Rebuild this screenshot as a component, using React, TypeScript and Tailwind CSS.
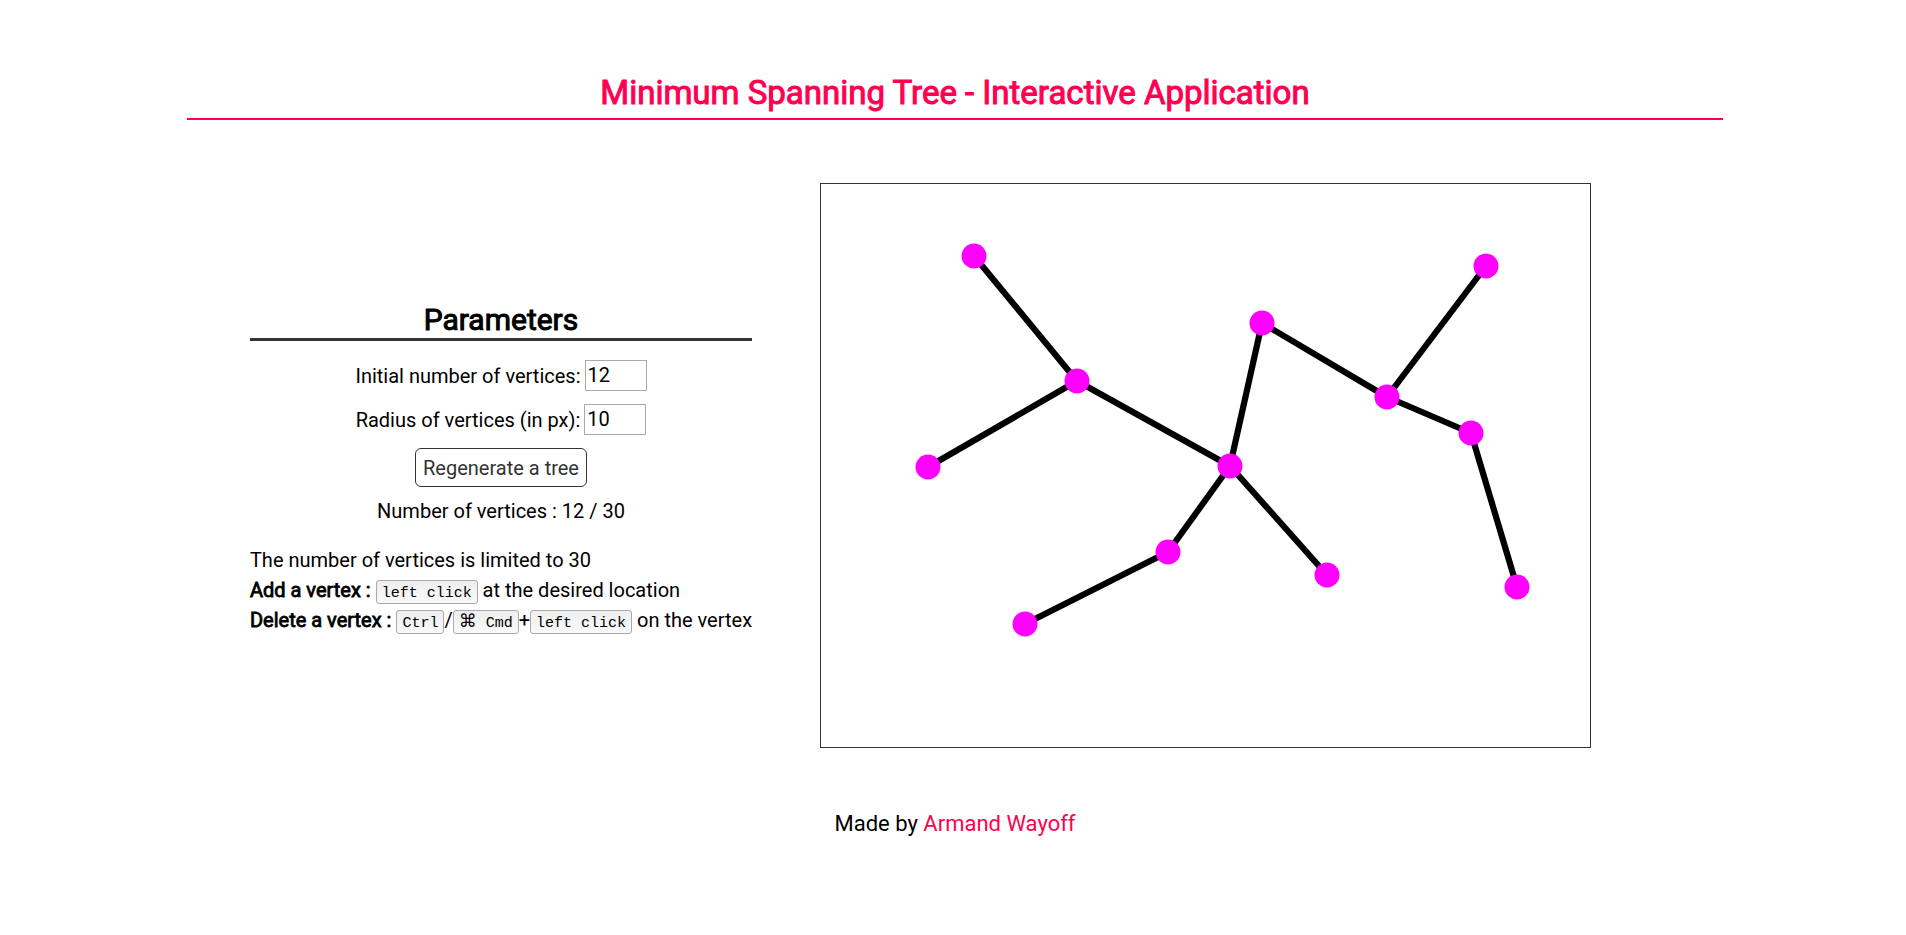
import { useState } from "react";
import type { ReactNode } from "react";

const vertices: [number, number][] = [
  [153, 72],
  [256, 197],
  [107, 283],
  [409, 282],
  [441, 139],
  [566, 213],
  [665, 82],
  [650, 249],
  [696, 403],
  [506, 391],
  [347, 368],
  [204, 440],
];

const edges: [number, number][] = [
  [0, 1],
  [1, 2],
  [1, 3],
  [3, 4],
  [4, 5],
  [5, 6],
  [5, 7],
  [7, 8],
  [3, 9],
  [3, 10],
  [10, 11],
];

function Key({ children }: { children: ReactNode }) {
  return (
    <kbd className="inline-block h-6 rounded-[3px] border border-[#aaa] bg-linear-to-b from-[#eee] to-[#f9f9f9] px-[5px] pt-[4px] align-middle font-['Liberation_Mono','DejaVu_Sans',monospace] text-[15px] leading-[18px]">
      {children}
    </kbd>
  );
}

function NumberField({ id, label, initial }: { id: string; label: string; initial: string }) {
  const [value, setValue] = useState(initial);
  return (
    <div className="flex items-center gap-1">
      <label htmlFor={id}>{label}</label>
      <input
        id={id}
        type="text"
        inputMode="numeric"
        value={value}
        onChange={(e) => setValue(e.target.value)}
        className="h-[31px] w-[62px] border border-[#aaa] bg-white px-[2px] pb-px"
      />
    </div>
  );
}

export default function App() {
  return (
    <div className="pt-[72px] pr-[183px] pl-[187px] font-[Roboto,sans-serif] text-[20px] leading-[30px] text-black">
      <header className="border-b-2 border-[#ff0050] pb-1">
        <h1 className="text-center text-[33px] leading-[42px] font-normal text-[#ff0050] [-webkit-text-stroke:1px_#ff0050]">
          Minimum Spanning Tree - Interactive Application
        </h1>
      </header>

      <main className="mt-[63px] flex items-center justify-center gap-[68px] pr-[69px]">
        <section className="flex flex-col pt-[6px]">
          <h2 className="border-b-3 border-[#333] text-center text-[30px] leading-[36px] font-normal [-webkit-text-stroke:1px_black]">
            Parameters
          </h2>
          <div className="mt-[19px] flex flex-col items-center gap-[13px]">
            <NumberField id="count" label="Initial number of vertices:" initial="12" />
            <NumberField id="radius" label="Radius of vertices (in px):" initial="10" />
            <button
              type="button"
              className="h-[39px] rounded-[6px] border border-[#333] bg-white px-[7px] text-[#333]"
            >
              Regenerate a tree
            </button>
          </div>
          <p className="mt-[9px] text-center">Number of vertices : 12 / 30</p>
          <div className="mt-[19px]">
            <p>The number of vertices is limited to 30</p>
            <p>
              <strong className="font-normal [-webkit-text-stroke:0.8px_black]">Add a vertex :</strong>{" "}
              <Key>left click</Key> at the desired location
            </p>
            <p>
              <strong className="font-normal [-webkit-text-stroke:0.8px_black]">Delete a vertex :</strong>{" "}
              <Key>Ctrl</Key>/
              <Key>
                <span className="inline-block w-[18px] text-center font-['DejaVu_Sans',sans-serif] text-[18px] leading-3">
                  ⌘
                </span>{" "}
                Cmd
              </Key>
              +<Key>left click</Key> on the vertex
            </p>
          </div>
        </section>

        <div className="w-[771px] border border-[#333]">
          <svg viewBox="0 0 769 563" className="block w-full" role="img" aria-label="Minimum spanning tree">
            {edges.map(([a, b]) => (
              <line
                key={`${a}-${b}`}
                x1={vertices[a][0]}
                y1={vertices[a][1]}
                x2={vertices[b][0]}
                y2={vertices[b][1]}
                stroke="#000"
                strokeWidth="6.2"
              />
            ))}
            {vertices.map(([x, y]) => (
              <circle key={`${x}-${y}`} cx={x} cy={y} r="12.5" fill="#f0f" />
            ))}
          </svg>
        </div>
      </main>

      <footer className="mt-[60px] text-center text-[22px] leading-8">
        Made by{" "}
        <a href="#author" className="text-[#ff0050]">
          Armand Wayoff
        </a>
      </footer>
    </div>
  );
}
